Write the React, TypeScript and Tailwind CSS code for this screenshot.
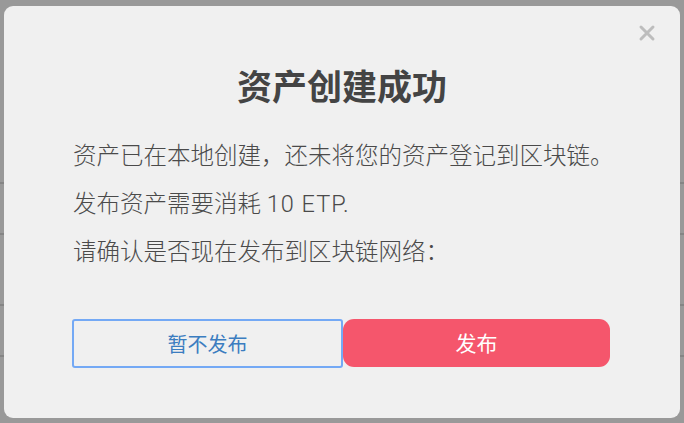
import React from "react";

const font = '"Noto Sans CJK SC", "Noto Sans", sans-serif';
const bodyFont = 'Roboto, "Noto Sans CJK SC", sans-serif';

export default function App() {
  return (
    <div
      className="relative w-[684px] h-[423px] overflow-hidden bg-[#999999]"
      style={{ fontFamily: font }}
    >
      {/* page content behind the overlay */}
      <div className="flex flex-col pt-[182px]">
        <div className="h-[51px] border-t-2 border-[#858585]" />
        <div className="h-[71px] border-t-2 border-[#858585]" />
        <div className="h-[51px] border-t-2 border-[#858585]" />
        <div className="h-[51px] border-t-2 border-[#858585]" />
      </div>

      <div className="absolute left-[4px] top-[6px] w-[676px] h-[412px] rounded-[9px] bg-[#f0f0f0] flex flex-col">
        <button className="absolute right-[24px] top-[18px] text-[#bdbdbd]">
          <svg width="18" height="18" viewBox="0 0 18 18">
            <path
              d="M3 3 L15 15 M15 3 L3 15"
              stroke="currentColor"
              strokeWidth="3"
              strokeLinecap="round"
            />
          </svg>
        </button>

        <h1 className="mt-[55px] text-center text-[35px] leading-[48px] font-bold text-[#444444]">
          资产创建成功
        </h1>

        <div
          className="mt-[23px] pl-[69px] flex flex-col text-[23.5px] leading-[48px] text-[#4a4a4a] font-light"
          style={{ fontFamily: bodyFont }}
        >
          <p>资产已在本地创建，还未将您的资产登记到区块链。</p>
          <p>
            发布资产需要消耗 <span className="tracking-[1px]">10 ETP.</span>
          </p>
          <p>请确认是否现在发布到区块链网络：</p>
        </div>

        <div className="mt-[43px] pl-[68px] flex">
          <button className="w-[271px] h-[49px] border-2 border-[#74a9f5] rounded-[3px] text-[20px] text-[#3b7dc0]">
            暂不发布
          </button>
          <button className="w-[267px] h-[48px] rounded-[11px] bg-[#f5566c] text-[21px] text-white">
            发布
          </button>
        </div>
      </div>
    </div>
  );
}
